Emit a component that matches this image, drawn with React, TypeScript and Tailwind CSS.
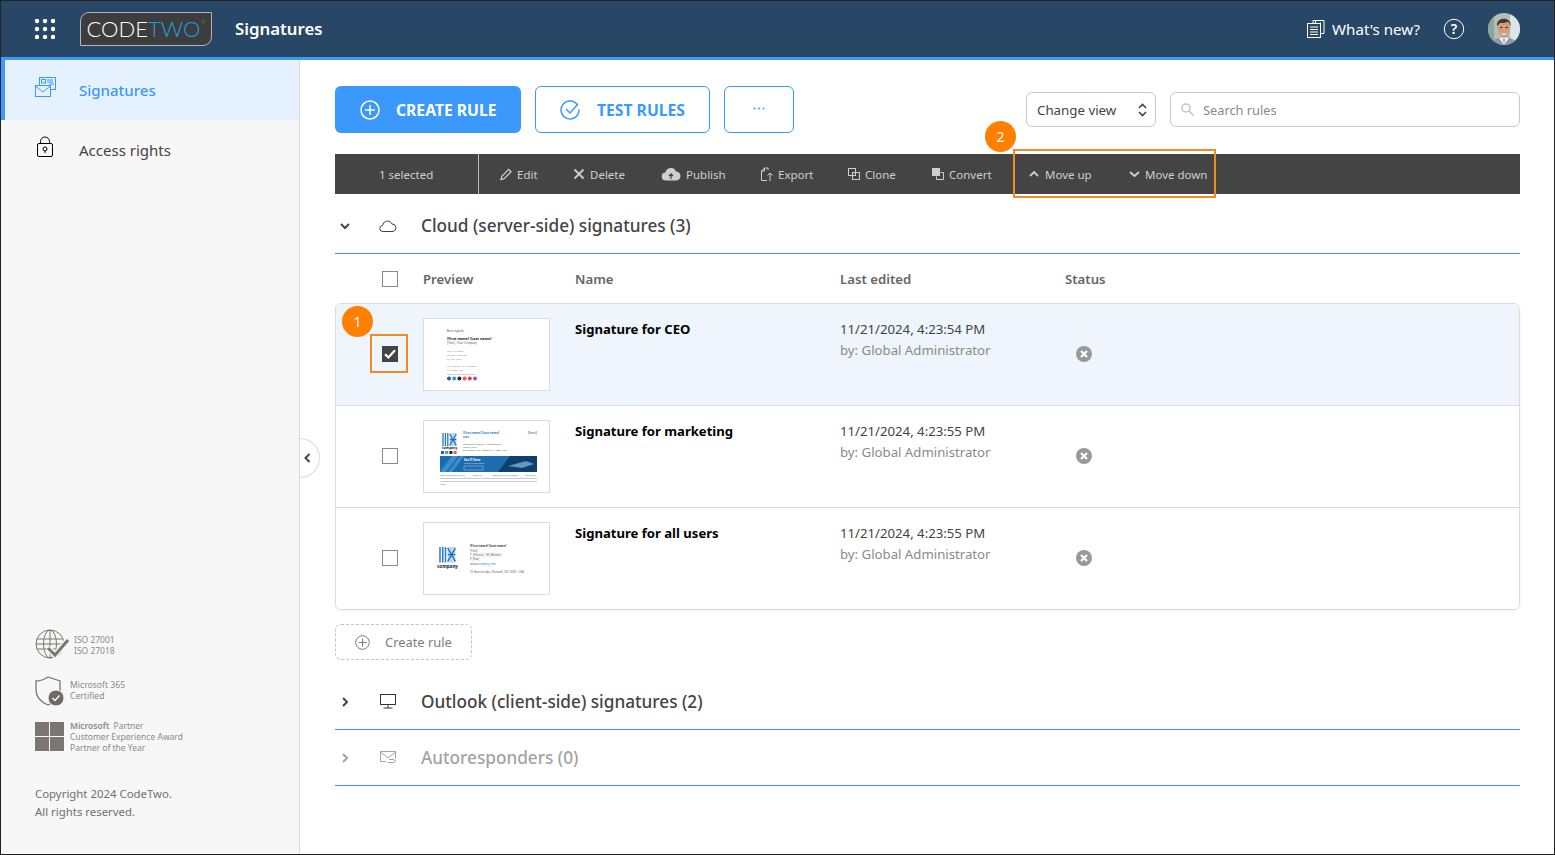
import React from "react";

const S = ({ w, h, vb, children, cls }: { w: number; h: number; vb?: string; children: React.ReactNode; cls?: string }) => (
  <svg width={w} height={h} viewBox={vb ?? `0 0 ${w} ${h}`} fill="none" stroke="currentColor" strokeWidth={1} className={`shrink-0 ${cls ?? ""}`}>
    {children}
  </svg>
);

const GridDots = () => (
  <S w={20} h={20} cls="text-white">
    {[2, 10, 18].flatMap((y) => [2, 10, 18].map((x) => <circle key={`${x}-${y}`} cx={x} cy={y} r={2.2} fill="currentColor" stroke="none" />))}
  </S>
);

const Logo = () => (
  <div className="flex h-[34px] w-[132px] items-center justify-center rounded-tl-[9px] rounded-br-[9px] border border-[#b5b5b5] bg-[#3d3d3d] font-['Lato',sans-serif] text-[22px] leading-none font-light">
    <span className="text-white">CODE</span>
    <span className="text-[#1aa0e0]">TWO</span>
    <span className="mb-[14px] ml-px text-[5px] text-[#9a9a9a]">®</span>
  </div>
);

const Avatar = () => (
  <svg width={32} height={32} viewBox="0 0 32 32" className="shrink-0 rounded-full">
    <rect width="32" height="32" fill="#aebfb9" />
    <rect x="22" width="10" height="32" fill="#dbe6e4" />
    <rect width="6" height="32" fill="#8ea39c" />
    <path d="M3 32c1-6 6-7 13-8 7 1 12 2 13 8z" fill="#8d98a3" />
    <path d="M11 25l5 7 5-7-5-1z" fill="#eef1f7" />
    <path d="M15 26l1 6 1-6z" fill="#7f8fd0" />
    <path d="M9.500 13c0-9 13-9 13 0 0 6-3 12-6.500 12S9.500 19 9.500 13z" fill="#cf9c7e" />
    <path d="M9 13c-1-9 14-10 14 0-1-2-2-4-3-4-3 1-6 1-8 1-1 1-2 2-3 3z" fill="#4e3627" />
    <rect x="12" y="14" width="2.500" height="1" fill="#3d2a1f" />
    <rect x="17.500" y="14" width="2.500" height="1" fill="#3d2a1f" />
    <path d="M13.500 20.500c1.500 1 3.500 1 5 0" stroke="#fff" strokeWidth="1" fill="none" />
  </svg>
);

const SigIcon = () => (
  <S w={22} h={22} cls="text-[#3b99fc]">
    <rect x="4.5" y="1.5" width="16" height="12" />
    <rect x="6.5" y="3.5" width="4" height="3.5" />
    <path d="M12 4h6M12 6h6M14 8h5" />
    <rect x="0.5" y="9.5" width="15" height="11" fill="#e5f1ff" />
    <path d="M.5 10l7.5 6 7.5-6" />
  </S>
);

const LockIcon = () => (
  <S w={18} h={22} cls="text-black">
    <rect x="1.5" y="7.5" width="15" height="13" rx="1.5" />
    <path d="M4.5 7.5V5.5a4.5 4.5 0 0 1 9 0v2" />
    <circle cx="9" cy="13" r="2" />
    <path d="M9 15v2" />
  </S>
);

const Thumb1 = () => (
  <svg width={125} height={71} viewBox="0 0 125 71" fontFamily="'Noto Sans',sans-serif">
    <g fill="#555">
      <text x="23" y="13" fontSize="2.8">Best regards,</text>
      <text x="23" y="20.500" fontSize="3.700" fill="#222" fontWeight="700">[First name] [Last name]</text>
      <text x="23" y="25" fontSize="2.900">[Title] - Your Company</text>
      <text x="23" y="33" fontSize="2.500" fill="#888">[M] T: [Phone]</text>
      <text x="23" y="37" fontSize="2.500" fill="#888">[E] [Fax: [Mobile]</text>
      <text x="23" y="41" fontSize="2.500" fill="#888">[F] Fax: [Fax]</text>
      <text x="23" y="48" fontSize="2.500" fill="#888">25 Hanover Ave, Norwalk</text>
      <text x="23" y="52" fontSize="2.500" fill="#888">NY 10001, USA</text>
      <text x="23" y="56" fontSize="2.500" fill="#888">www.yourcompany.com</text>
    </g>
    {["#2a5d9f", "#3e9bd0", "#222222", "#e05a5a", "#d2424f", "#9a58b8"].map((c, i) => (
      <circle key={c} cx={25 + i * 5.2} cy={59.5} r={2} fill={c} />
    ))}
  </svg>
);

const Mark = ({ x, y, s }: { x: number; y: number; s: number }) => (
  <g transform={`translate(${x} ${y}) scale(${s})`} fill="none">
    <path d="M0 0v14M2.5 0v14M5 0v14" stroke="#2c7fc7" strokeWidth={1.4} />
    <path d="M7 0h7v14H7z" fill="#b8d8f0" />
    <path d="M7 1l7 12M14 1L7 13M7 7h7" stroke="#1e6fb8" strokeWidth={1.2} />
  </g>
);

const Thumb2 = () => (
  <svg width={125} height={71} viewBox="0 0 125 71" fontFamily="'Noto Sans',sans-serif">
    <Mark x={19} y={12} s={0.95} />
    <text x="18" y="28" fontSize="3.4" fontWeight="700" fill="#222">company</text>
    {["#2a5d9f", "#3e9bd0", "#222222", "#e05a5a"].map((c, i) => (
      <rect key={c} x={17 + i * 4.2} y={30} width={3} height={3} fill={c} />
    ))}
    <text x="39" y="13" fontSize="3" fill="#2c7fc7" fontWeight="700">[First name] [Last name]</text>
    <rect x="39" y="15.5" width="6" height="1" fill="#2c7fc7" />
    <text x="104" y="13" fontSize="2.8" fill="#555">[Email]</text>
    <text x="39" y="24" fontSize="2.3" fill="#555">[Company] [Mobile] | [Department]</text>
    <text x="39" y="27" fontSize="2.3" fill="#555">Mobile: [Fax]</text>
    <text x="39" y="30" fontSize="2.3" fill="#555">25 Hanover Ave, Norwalk, NY 10001, USA</text>
    <rect x="16" y="35" width="97" height="16" fill="#1d6cb0" />
    <path d="M16 51L28 35h6L22 51zM24 51l12-16h4L28 51z" fill="#3d8ccd" />
    <path d="M74 51L86 35h27v16z" fill="#0f3f70" />
    <path d="M84 45l18-5 8 3-12 4z" fill="#6796bd" />
    <text x="40" y="39.5" fontSize="2.8" fill="#fff" fontWeight="700">Get IT Done</text>
    <text x="40" y="43" fontSize="2.4" fill="#d8e8f5">Move to the cloud</text>
    <rect x="40" y="45" width="19" height="4" fill="none" stroke="#cfe3f5" strokeWidth=".4" />
    <text x="16" y="54.5" fontSize="2.2" fill="#2c7fc7">www.yourcompany.com</text>
    <text x="48" y="54.5" fontSize="2.2" fill="#2c7fc7">Follow us</text>
    <text x="68" y="54.5" fontSize="2.2" fill="#2c7fc7">Customer Support Center</text>
    <text x="101" y="54.5" fontSize="2.2" fill="#2c7fc7">Contact us</text>
    <path d="M16 56h97" stroke="#ddd" strokeWidth=".4" />
    <rect x="16" y="57" width="97" height="1" fill="#ccc" />
    <rect x="16" y="60" width="97" height="1" fill="#ccc" />
    <rect x="16" y="63" width="6" height="1" fill="#ccc" />
  </svg>
);

const Thumb3 = () => (
  <svg width={125} height={71} viewBox="0 0 125 71" fontFamily="'Noto Sans',sans-serif">
    <Mark x={16} y={24} s={1.1} />
    <text x="13" y="45" fontSize="4.6" fontWeight="700" fill="#222">company</text>
    <text x="46" y="24" fontSize="3" fill="#444" fontWeight="700">[First name] [Last name]</text>
    <text x="46" y="29" fontSize="2.8" fill="#555">[Title]</text>
    <text x="46" y="33" fontSize="2.8" fill="#555">T: [Phone] | M: [Mobile]</text>
    <text x="46" y="37" fontSize="2.8" fill="#555">F: [Fax]</text>
    <text x="46" y="42" fontSize="2.8" fill="#2c7fc7">www.company.com</text>
    <text x="46" y="50" fontSize="2.8" fill="#666">25 Hanover Ave, Norwalk, NY 10001, USA</text>
  </svg>
);

const Check = ({ checked }: { checked?: boolean }) =>
  checked ? (
    <div className="flex h-4 w-4 items-center justify-center bg-[#444]">
      <svg width={12} height={10} viewBox="0 0 12 10" fill="none" stroke="#fff" strokeWidth={2.2}>
        <path d="M1 5.2l3.4 3.2L11 1.2" />
      </svg>
    </div>
  ) : (
    <div className="h-4 w-4 border border-[#8a8a8a] bg-white" />
  );

const StatusX = () => (
  <svg width={16} height={16} viewBox="0 0 16 16">
    <circle cx="8" cy="8" r="8" fill="#999" />
    <path d="M5 5l6 6M11 5l-6 6" stroke="#fff" strokeWidth={2.2} />
  </svg>
);

const Badge = ({ n, cls }: { n: string; cls: string }) => (
  <div className={`absolute flex h-[31px] w-[31px] items-center justify-center rounded-full bg-[#ff8000] text-[14px] text-white ${cls}`}>{n}</div>
);

const ToolItem = ({ icon, label, cls }: { icon: React.ReactNode; label: string; cls: string }) => (
  <div className={`flex shrink-0 items-center gap-[5px] ${cls}`}>
    <span className="flex h-4 items-center">{icon}</span>
    <span className="pt-[1px]">{label}</span>
  </div>
);

const rows = [
  { name: "Signature for CEO", date: "11/21/2024, 4:23:54 PM", thumb: <Thumb1 />, sel: true },
  { name: "Signature for marketing", date: "11/21/2024, 4:23:55 PM", thumb: <Thumb2 /> },
  { name: "Signature for all users", date: "11/21/2024, 4:23:55 PM", thumb: <Thumb3 /> },
];

const Section = ({ open, icon, title, muted, cls }: { open?: boolean; icon: React.ReactNode; title: string; muted?: boolean; cls?: string }) => (
  <div className={`flex h-14 items-center border-b border-[#4a90e2] ${muted ? "text-[#a3a3a3]" : "text-[#444]"} ${cls ?? ""}`}>
    <div className="flex w-[20px] justify-center">
      <svg width={10} height={10} viewBox="0 0 10 10" fill="none" stroke="currentColor" strokeWidth={2}>
        {open ? <path d="M1 3l4 4 4-4" /> : <path d="M3 1l4 4-4 4" />}
      </svg>
    </div>
    <div className="flex w-[66px] justify-center">{icon}</div>
    <span className="text-[17.200px] font-medium">{title}</span>
  </div>
);

export default function App() {
  return (
    <div className="flex h-[855px] w-[1555px] flex-col overflow-hidden border border-[#222] bg-white font-['Noto_Sans',sans-serif] text-[#444]">
      <header className="flex h-[59px] shrink-0 items-center border-b-[3px] border-[#3b99fc] bg-[#284767] pr-[34px] pl-[34px] text-white">
        <GridDots />
        <div className="ml-[25px]"><Logo /></div>
        <span className="ml-[23px] text-[16.800px] font-semibold">Signatures</span>
        <div className="ml-auto flex items-center">
          <svg width={18} height={18} viewBox="0 0 18 18" fill="none" stroke="#fff" strokeWidth={1}>
            <path d="M6 3V.5h11v13h-3" />
            <rect x=".5" y="3.5" width="13" height="14" />
            <path d="M3 7h8M3 9.5h8M3 12h8M3 14.500h8M8.500 3V.5M13 3h1" />
          </svg>
          <span className="ml-[7px] text-[15.100px]">What's new?</span>
          <svg className="ml-[23px]" width={22} height={22} viewBox="0 0 22 22" fill="none" stroke="#fff">
            <circle cx="11" cy="11" r="9.7" />
            <text x="11" y="16" textAnchor="middle" fontSize="14" fontWeight="600" fill="#fff" stroke="none">?</text>
          </svg>
          <div className="ml-[23px]"><Avatar /></div>
        </div>
      </header>

      <div className="flex min-h-0 flex-1">
        <aside className="relative flex w-[299px] shrink-0 flex-col justify-between border-r border-[#d9d9d9] bg-[#f7f7f7] pb-[33px]">
          <nav>
            <div className="flex h-[60px] items-center border-l-[4px] border-[#3b99fc] bg-[#e5f1ff] pl-[30px] text-[#3b99fc]">
              <div className="w-[44px] pb-[6px]"><SigIcon /></div>
              <span className="text-[15px] font-medium">Signatures</span>
            </div>
            <div className="flex h-[60px] items-center pl-[35px]">
              <div className="w-[43px] pb-[6px]"><LockIcon /></div>
              <span className="text-[15px]">Access rights</span>
            </div>
          </nav>
          <div className="pl-[34px] text-[#8a8a8a]">
            <div className="flex items-center">
              <svg width={34} height={32} viewBox="0 0 34 32" fill="none" stroke="#7b7672" strokeWidth={1}>
                <circle cx="15" cy="15" r="14" />
                <ellipse cx="15" cy="15" rx="6.500" ry="14" />
                <path d="M15 1v28M2 10h26M1 15h28M2 20h26" />
                <path d="M13 19l7 7L33 11" stroke="#f7f7f7" strokeWidth={6} />
                <path d="M13 19l7 7L33 11" strokeWidth={3} />
              </svg>
              <div className="ml-[5px] text-[8.500px] leading-[11px]">ISO 27001<br />ISO 27018</div>
            </div>
            <div className="mt-[15px] flex items-center">
              <svg width={30} height={30} viewBox="0 0 30 30" fill="none" stroke="#7b7672" strokeWidth={1.300}>
                <path d="M13 1l12 4v9c0 7-5 12-12 15C6 26 1 21 1 14V5c5 0 9-2 12-4z" />
                <circle cx="21" cy="22" r="8" fill="#6f6a66" stroke="#f7f7f7" strokeWidth={1} />
                <path d="M17.500 22l2.500 2.500 4.500-5" stroke="#f7f7f7" strokeWidth={1.500} />
              </svg>
              <div className="ml-[5px] text-[8.600px] leading-[11px]">Microsoft 365<br />Certified</div>
            </div>
            <div className="mt-[14px] flex items-center">
              <div className="grid h-[29px] w-[29px] grid-cols-2 gap-px">
                <div className="bg-[#7b7672]" />
                <div className="bg-[#7b7672]" />
                <div className="bg-[#7b7672]" />
                <div className="bg-[#7b7672]" />
              </div>
              <div className="ml-[6px] text-[8.500px] leading-[11px]"><b className="mr-[2px] font-semibold">Microsoft</b> Partner<br />Customer Experience Award<br />Partner of the Year</div>
            </div>
            <div className="mt-[32px] text-[11.400px] leading-[18px] text-[#6f6f6f]">Copyright 2024 CodeTwo.<br />All rights reserved.</div>
          </div>
          <div className="absolute top-[378px] right-[-21px] flex h-[40px] w-[20px] items-center justify-center rounded-r-full border border-l-0 border-[#dcdcdc] bg-white pr-[6px]">
            <svg width={8} height={10} viewBox="0 0 8 10" fill="none" stroke="#444" strokeWidth={2}><path d="M6.500 1l-4 4 4 4" /></svg>
          </div>
        </aside>

        <main className="relative min-w-0 flex-1 pt-[26px] pr-[34px] pl-[35px]">
          <div className="flex items-start">
            <div className="flex h-[47px] w-[186px] items-center rounded-[6px] bg-[#3b99fc] pl-[25px] text-white">
              <svg width={20} height={20} viewBox="0 0 20 20" fill="none" stroke="#fff" strokeWidth={1.500}>
                <circle cx="10" cy="10" r="9" /><path d="M10 5v10M5 10h10" />
              </svg>
              <span className="ml-[16px] pt-[2px] text-[15.700px] font-bold">CREATE RULE</span>
            </div>
            <div className="ml-[14px] flex h-[47px] w-[175px] items-center rounded-[6px] border border-[#3b99fc] pl-[24px] text-[#3b99fc]">
              <svg width={21} height={21} viewBox="0 0 21 21" fill="none" stroke="#3b99fc" strokeWidth={1.500}>
                <path d="M17.500 6A9 9 0 1 0 19 10.500" /><path d="M6 10l4 4 8-9" />
              </svg>
              <span className="ml-[16px] pt-[2px] text-[15.700px] font-bold">TEST RULES</span>
            </div>
            <div className="ml-[14px] flex h-[47px] w-[70px] items-center justify-center rounded-[6px] border border-[#3b99fc] pb-[2px]">
              <svg width={12} height={3} viewBox="0 0 12 3" fill="#3b99fc"><circle cx="1.500" cy="1.500" r="1" /><circle cx="6" cy="1.500" r="1" /><circle cx="10.500" cy="1.500" r="1" /></svg>
            </div>
            <div className="mt-[6px] ml-[232px] flex h-[35px] w-[130px] items-center justify-between rounded-[6px] border border-[#c8c8c8] pr-[8px] pl-[10px] text-[13.300px]">
              <span className="pt-[2px]">Change view</span>
              <svg width={9} height={14} viewBox="0 0 9 14" fill="none" stroke="#444" strokeWidth={1.600}><path d="M1 5l3.500-3.500L8 5M1 9l3.500 3.500L8 9" /></svg>
            </div>
            <div className="mt-[6px] ml-[14px] flex h-[35px] w-[350px] items-center rounded-[6px] border border-[#c8c8c8] pl-[10px] text-[12.800px] text-[#8a8a8a]">
              <svg width={13} height={13} viewBox="0 0 13 13" fill="none" stroke="#c4c4c4" strokeWidth={1.500}><circle cx="5" cy="5" r="4" /><path d="M8 8l4.500 4.500" /></svg>
              <span className="ml-[9px] pt-[2px]">Search rules</span>
            </div>
          </div>

          <div className="mt-[21px] flex h-[40px] items-center bg-[#444] text-[11.500px] text-[#cfcfcf]">
            <div className="flex h-full w-[144px] items-center border-r border-[#bdbdbd] pt-[2px] pl-[44px]">1 selected</div>
            <ToolItem cls="ml-[21px] w-[73px]" label="Edit" icon={<svg width={12} height={13} viewBox="0 0 13 13" fill="none" stroke="#cfcfcf" strokeWidth={1.300}><path d="M1 12l1-3.500L9.500 1 12 3.500 4.500 11z" /></svg>} />
            <ToolItem cls="w-[88px]" label="Delete" icon={<svg width={12} height={12} viewBox="0 0 12 12" fill="none" stroke="#cfcfcf" strokeWidth={1.800}><path d="M1.500 1.500l9 9M10.500 1.500l-9 9" /></svg>} />
            <ToolItem cls="w-[99px]" label="Publish" icon={<svg width={20} height={14} viewBox="0 0 20 14"><path d="M5 13.500a4 4 0 0 1-.5-8A5.500 5.500 0 0 1 15 4.500a4.500 4.500 0 0 1 0 9z" fill="#cfcfcf" /><path d="M10 12V7M8 9l2-2 2 2" stroke="#444" strokeWidth={1.300} fill="none" /></svg>} />
            <ToolItem cls="w-[88px]" label="Export" icon={<svg width={13} height={15} viewBox="0 0 13 15" fill="none" stroke="#cfcfcf"><path d="M7 13.500H1.500V4l3-3H8v2" /><path d="M4.500 1v3h-3" /><path d="M10 14V6M7.500 8.500L10 6l2.500 2.500" /></svg>} />
            <ToolItem cls="w-[84px]" label="Clone" icon={<svg width={12} height={12} viewBox="0 0 12 12" fill="none" stroke="#cfcfcf"><rect x=".5" y=".5" width="7" height="7" /><rect x="4.500" y="4.500" width="7" height="7" /></svg>} />
            <ToolItem cls="w-[96px]" label="Convert" icon={<svg width={12} height={12} viewBox="0 0 12 12" fill="none" stroke="#cfcfcf"><rect x="0" y="0" width="8" height="8" fill="#cfcfcf" stroke="none" /><path d="M8.500 4.500h3v7h-7v-3" /></svg>} />
            <ToolItem cls="w-[101px]" label="Move up" icon={<svg width={12} height={8} viewBox="0 0 12 8" fill="none" stroke="#cfcfcf" strokeWidth={1.800}><path d="M2 6l4-4 4 4" /></svg>} />
            <ToolItem cls="" label="Move down" icon={<svg width={11} height={8} viewBox="0 0 11 8" fill="none" stroke="#cfcfcf" strokeWidth={1.800}><path d="M1 2l4.500 4L10 2" /></svg>} />
          </div>

          <div className="absolute top-[89px] left-[713px] h-[49px] w-[203px] border-2 border-[#f08a24]" />
          <Badge n="2" cls="left-[685px] top-[61px]" />

          <Section open cls="h-[60px] pt-[4px]" title="Cloud (server-side) signatures (3)" icon={<svg width={18} height={12} viewBox="0 0 18 12" fill="none" stroke="#444"><path d="M4 11.500a3 3 0 0 1-.5-6A5 5 0 0 1 13 4a3.800 3.800 0 0 1 1 7.500z" /></svg>} />

          <div className="grid h-[49px] grid-cols-[88px_152px_265px_225px_1fr] items-center text-[13.200px] font-semibold text-[#666]">
            <div className="flex justify-end pr-[25px]"><Check /></div>
            <div className="pt-[2px]">Preview</div>
            <div className="pt-[2px]">Name</div>
            <div className="pt-[2px]">Last edited</div>
            <div className="pt-[2px]">Status</div>
          </div>

          <div className="overflow-hidden rounded-[6px] border border-[#dcdcdc] shadow-[0_1px_3px_rgba(0,0,0,0.06)]">
            {rows.map((r, i) => (
              <div key={r.name} className={`grid grid-cols-[87px_152px_265px_225px_1fr] pt-[14px] ${i > 0 ? "h-[102px] border-t border-[#dcdcdc]" : "h-[101px]"} ${r.sel ? "bg-[#eef5fd]" : "bg-white"}`}>
                <div className="flex h-[72px] items-center justify-end pr-[25px]"><Check checked={r.sel} /></div>
                <div className="h-[73px] w-[127px] border border-[#dcdcdc] bg-white">{r.thumb}</div>
                <div className="text-[13.100px] leading-[22px] font-bold text-black">{r.name}</div>
                <div className="pt-[1px] text-[13.200px] leading-[21px]">
                  <div>{r.date}</div>
                  <div className="text-[#8a8a8a]">by: Global Administrator</div>
                </div>
                <div className="flex h-[72px] items-center pl-[11px]"><StatusX /></div>
              </div>
            ))}
          </div>

          <div className="absolute top-[274px] left-[70px] h-[39px] w-[38px] border-2 border-[#f08a24]" />
          <Badge n="1" cls="left-[42px] top-[246px]" />

          <div className="mt-[14px] flex h-[36px] w-[137px] items-center rounded-[6px] border border-dashed border-[#c4c4c4] pl-[19px] text-[12.900px] text-[#7d7d7d]">
            <svg width={15} height={15} viewBox="0 0 15 15" fill="none" stroke="#7d7d7d"><circle cx="7.500" cy="7.500" r="6.800" /><path d="M7.500 3.500v8M3.500 7.500h8" /></svg>
            <span className="ml-[15px] pt-[1px]">Create rule</span>
          </div>

          <div className="mt-[14px]">
            <Section title="Outlook (client-side) signatures (2)" icon={<svg width={16} height={15} viewBox="0 0 16 15" fill="none" stroke="#333"><rect x=".5" y=".5" width="15" height="10" /><path d="M8 11v3M3.500 14h9" /></svg>} />
            <Section muted title="Autoresponders (0)" icon={<svg width={16} height={15} viewBox="0 0 16 15" fill="none" stroke="#a3a3a3"><path d="M6 11.500H.5v-10h15v7" /><path d="M.5 2L8 8l7.500-6" /><path d="M7.500 12.500h6a1.500 1.500 0 0 0 0-3H9" /></svg>} />
          </div>
        </main>
      </div>
    </div>
  );
}
